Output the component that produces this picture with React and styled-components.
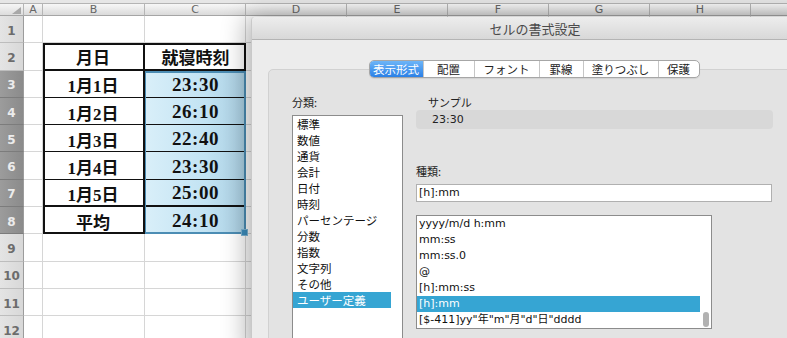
import React from 'react'
import styled, { createGlobalStyle } from 'styled-components'

const GlobalStyle = createGlobalStyle`
  html, body { margin: 0; padding: 0; background: #fff; overflow: hidden; }
`

const UI = `"DejaVu Sans", "Noto Sans CJK JP", sans-serif`
const JP = `"Noto Sans CJK JP", "DejaVu Sans", sans-serif`
const SERIF = `"Liberation Serif", "Noto Sans CJK JP", serif`

const Screen = styled.div`
  position: relative;
  width: 787px;
  height: 338px;
  overflow: hidden;
  background: #fff;
`
const TopStrip = styled.div`
  height: 3px;
  background: #e6e6e6;
  border-bottom: 1px solid #b4b4b4;
`
const Sheet = styled.div`
  display: grid;
  grid-template-columns: 24px 19px 102px 101px repeat(6, 101px);
  grid-template-rows: 12px repeat(12, 27.3px);
`
const Corner = styled.div`
  grid-column: 1;
  grid-row: 1;
  background: linear-gradient(#f6f6f6, #dcdcdc);
  border-right: 1px solid #b5b5b5;
  border-bottom: 1px solid #a5a5a5;
  display: flex;
  align-items: flex-end;
  justify-content: flex-end;
  padding: 0 2px 1px 0;
`
const ColHead = styled.div`
  grid-column: ${p => p.$c};
  grid-row: 1;
  background: linear-gradient(#f7f7f7, #dadada);
  border-right: 1px solid #b5b5b5;
  border-bottom: 1px solid #a5a5a5;
  font: 11px ${UI};
  color: #666;
  display: flex;
  align-items: center;
  justify-content: center;
`
const RowHead = styled.div`
  grid-column: 1;
  grid-row: ${p => p.$r};
  background: ${p => p.$active ? 'linear-gradient(90deg, #9c9c9c, #8b8b8b)' : 'linear-gradient(90deg, #e4e4e4, #d8d8d8)'};
  color: ${p => p.$active ? '#ececec' : '#6c6c6c'};
  border-right: 1px solid #9c9c9c;
  border-bottom: 1px solid ${p => p.$active ? '#7c7c7c' : '#bdbdbd'};
  font: bold 12px ${UI};
  display: flex;
  align-items: center;
  justify-content: center;
  padding-top: 3px;
`
const Cell = styled.div`
  grid-column: ${p => p.$c};
  grid-row: ${p => p.$r};
  border-right: 1px solid #d6d6d6;
  border-bottom: 1px solid #d6d6d6;
`
const TableCell = styled.div`
  grid-column: ${p => p.$c};
  grid-row: ${p => p.$r};
  z-index: 2;
  border-bottom: ${p => p.$thick ? 2 : 1}px solid #111;
  border-right: ${p => p.$divider ? '2px solid #111' : 'none'};
  display: flex;
  align-items: center;
  justify-content: center;
  padding-top: 2px;
  font: bold ${p => p.$size}px ${SERIF};
  letter-spacing: ${p => p.$size > 18 ? '0.5px' : '0'};
  color: #111;
`
const TableFrame = styled.div`
  grid-column: 3 / 5;
  grid-row: 3 / 10;
  z-index: 3;
  border: 2px solid #111;
`
const Selection = styled.div`
  grid-column: 4;
  grid-row: 4 / 10;
  z-index: 1;
  background: linear-gradient(90deg, #d9eff9, #c2e3f3 60%, #aacfe2);
`
const SelectionEdge = styled.div`
  grid-column: 4;
  grid-row: 4 / 10;
  z-index: 4;
  position: relative;
  border: 2px solid #4c8db4;
  border-left-width: 1px;
`
const Handle = styled.div`
  position: absolute;
  right: -4px;
  bottom: -4px;
  width: 5px;
  height: 5px;
  background: #3d8fbf;
  border: 1px solid #7fb7d6;
`

const Dialog = styled.div`
  position: absolute;
  left: 251px;
  top: 17px;
  width: 562px;
  height: 340px;
  background: #ececec;
  border-left: 1px solid #c9c9c9;
  border-radius: 4px 4px 0 0;
  box-shadow: -4px 0 26px rgba(0, 0, 0, 0.33);
  display: flex;
  flex-direction: column;
  z-index: 10;
`
const TitleBar = styled.div`
  flex: none;
  height: 22px;
  background: linear-gradient(#ededed, #d8d8d8);
  border-bottom: 1px solid #b4b4b4;
  border-radius: 4px 4px 0 0;
  font: 13px ${JP};
  color: #4a4a4a;
  display: flex;
  align-items: center;
  justify-content: center;
  padding-left: 4px;
`
const Body = styled.div`
  flex: 1;
  display: flex;
  flex-direction: column;
  padding: 20px 17px 0 16px;
`
const TabsRow = styled.div`
  display: flex;
  justify-content: center;
  position: relative;
  z-index: 1;
  padding-left: 3px;
`
const Tabs = styled.div`
  display: flex;
  height: 18px;
  box-sizing: border-box;
  background: #fff;
  border: 1px solid #a6a6a6;
  border-radius: 5px;
  overflow: hidden;
  box-shadow: 0 1px 1px rgba(0, 0, 0, 0.08);
`
const Tab = styled.div`
  width: ${p => p.$w}px;
  display: flex;
  align-items: center;
  justify-content: center;
  font: 11.5px ${JP};
  color: ${p => p.$on ? '#fff' : '#222'};
  background: ${p => p.$on ? 'linear-gradient(#6db5f8, #2b80e6)' : 'transparent'};
  border-left: ${p => p.$first ? 'none' : '1px solid #c6c6c6'};
`
const Panel = styled.div`
  flex: 1;
  margin-top: -9px;
  background: #e3e3e3;
  border: 1px solid #d1d1d1;
  border-radius: 5px;
  padding: 25px 0 0 23px;
  display: flex;
  gap: 13px;
`
const Column = styled.div`
  width: ${p => p.$w}px;
  display: flex;
  flex-direction: column;
`
const Label = styled.div`
  font: 11px ${JP};
  line-height: 14px;
  color: #222;
  margin-top: ${p => p.$mt || 0}px;
  padding-left: ${p => p.$indent || 0}px;
`
const ListBox = styled.div`
  margin-top: ${p => p.$mt}px;
  width: ${p => p.$w}px;
  height: ${p => p.$h}px;
  box-sizing: border-box;
  background: #fff;
  border: 1px solid #8c8c8c;
  display: flex;
`
const Items = styled.div`
  flex: 1;
  display: flex;
  flex-direction: column;
`
const Item = styled.div`
  height: 16px;
  padding-left: ${p => p.$pad}px;
  font: ${p => p.$ascii ? '11px' : '11.5px'} ${p => p.$ascii ? UI : JP};
  line-height: 16px;
  white-space: nowrap;
  color: ${p => p.$on ? '#fff' : '#111'};
  background: ${p => p.$on ? '#36a5d3' : 'transparent'};
`
const ScrollTrack = styled.div`
  width: 11px;
  flex: none;
  display: flex;
  flex-direction: column;
  justify-content: flex-end;
  align-items: center;
  padding-bottom: 1px;
`
const Thumb = styled.div`
  width: 6px;
  height: 15px;
  border-radius: 3px;
  background: #b2b2b2;
`
const SampleBox = styled.div`
  margin-top: 1px;
  height: 19px;
  border-radius: 4px;
  background: #d8d8d8;
  padding-left: 16px;
  font: 11px ${UI};
  line-height: 19px;
  color: #222;
`
const Input = styled.div`
  margin-top: 6px;
  height: 18px;
  width: 356px;
  box-sizing: border-box;
  background: #fff;
  border: 1px solid #b0b0b0;
  padding-left: 2px;
  font: 11px ${UI};
  line-height: 16px;
  color: #111;
`

// the last column runs past the window edge, so its letter is never seen
const cols = ['A', 'B', 'C', 'D', 'E', 'F', 'G', 'H', '']
const rows = [1, 2, 3, 4, 5, 6, 7, 8, 9, 10, 11, 12]

const tableRows = [
  ['月日', '就寝時刻'],
  ['1月1日', '23:30'],
  ['1月2日', '26:10'],
  ['1月3日', '22:40'],
  ['1月4日', '23:30'],
  ['1月5日', '25:00'],
  ['平均', '24:10'],
]

const tabs = [
  ['表示形式', 53],
  ['配置', 50],
  ['フォント', 64],
  ['罫線', 43],
  ['塗りつぶし', 74],
  ['保護', 40],
]

const categories = ['標準', '数値', '通貨', '会計', '日付', '時刻', 'パーセンテージ', '分数', '指数', '文字列', 'その他', 'ユーザー定義']
const formats = ['yyyy/m/d h:mm', 'mm:ss', 'mm:ss.0', '@', '[h]:mm:ss', '[h]:mm', '[$-411]yy"年"m"月"d"日"dddd']

const App = () => {
  return (
    <Screen>
      <GlobalStyle />
      <TopStrip />
      <Sheet>
        <Corner>
          <svg width="9" height="7" viewBox="0 0 9 7">
            <polygon points="9,0 9,7 0,7" fill="#a8a8a8" />
          </svg>
        </Corner>
        {cols.map((c, i) => <ColHead key={i} $c={i + 2}>{c}</ColHead>)}
        {rows.map(r => (
          <React.Fragment key={r}>
            <RowHead $r={r + 1} $active={r >= 3 && r <= 8}>{r}</RowHead>
            {cols.map((c, i) => <Cell key={i} $r={r + 1} $c={i + 2} />)}
          </React.Fragment>
        ))}
        <Selection />
        {tableRows.map((row, i) => (
          <React.Fragment key={i}>
            <TableCell $r={i + 3} $c={3} $divider $thick={i === 0 || i === 5} $size={17}>{row[0]}</TableCell>
            <TableCell $r={i + 3} $c={4} $thick={i === 0 || i === 5} $size={i === 0 ? 17 : 19}>{row[1]}</TableCell>
          </React.Fragment>
        ))}
        <TableFrame />
        <SelectionEdge>
          <Handle />
        </SelectionEdge>
      </Sheet>

      <Dialog>
        <TitleBar>セルの書式設定</TitleBar>
        <Body>
          <TabsRow>
            <Tabs>
              {tabs.map(([t, w], i) => (
                <Tab key={t} $w={w} $on={i === 0} $first={i === 0}>{t}</Tab>
              ))}
            </Tabs>
          </TabsRow>
          <Panel>
            <Column $w={111}>
              <Label>分類:</Label>
              <ListBox $mt={6} $w={111} $h={240}>
                <Items>
                  {categories.map((c, i) => (
                    <Item key={c} $pad={4} $on={i === categories.length - 1}>{c}</Item>
                  ))}
                </Items>
                <ScrollTrack />
              </ListBox>
            </Column>
            <Column $w={357}>
              <Label $indent={12}>サンプル</Label>
              <SampleBox>23:30</SampleBox>
              <Label $mt={35}>種類:</Label>
              <Input>[h]:mm</Input>
              <ListBox $mt={13} $w={296} $h={114}>
                <Items>
                  {formats.map((f, i) => (
                    <Item key={f} $pad={2} $ascii $on={i === 5}>{f}</Item>
                  ))}
                </Items>
                <ScrollTrack>
                  <Thumb />
                </ScrollTrack>
              </ListBox>
            </Column>
          </Panel>
        </Body>
      </Dialog>
    </Screen>
  )
}

export default App
